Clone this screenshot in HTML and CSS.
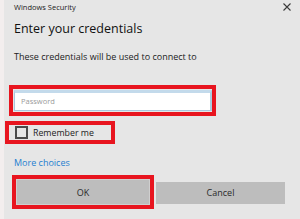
FILE: index.html
```html
<!DOCTYPE html>
<html>
<head>
<meta charset="utf-8">
<link rel="stylesheet" href="styles.css">
</head>
<body>
<div class="dialog">
  <div class="titlebar">
    <span class="app">Windows Security</span>
    <svg class="close" width="8" height="8" viewBox="0 0 8 8"><path d="M0.5 0.5L7.5 7.5M7.5 0.5L0.5 7.5" stroke="#3a3a3a" stroke-width="1.1" fill="none"/></svg>
  </div>
  <h1 class="title">Enter your credentials</h1>
  <p class="desc">These credentials will be used to connect to</p>
  <div class="hl hl-input"><div class="input">Password</div></div>
  <div class="hl hl-check"><span class="box"></span><span class="label">Remember me</span></div>
  <a class="more">More choices</a>
  <div class="buttons">
    <div class="hl hl-ok"><div class="btn ok">OK</div></div>
    <div class="btn cancel">Cancel</div>
  </div>
</div>
</body>
</html>
```
FILE: styles.css
```css
html, body { margin: 0; padding: 0; }
body {
  width: 300px; height: 219px; overflow: hidden;
  background: #f3eeee;
  font-family: "Open Sans", "Noto Sans", sans-serif;
  color: #1b1b1b;
}
.dialog {
  margin-left: 4px;
  height: 219px;
  background: #e6e6e6;
  display: flex; flex-direction: column; align-items: flex-start;
}
.titlebar {
  align-self: stretch;
  height: 14px;
  display: flex; align-items: center; justify-content: space-between;
  padding: 0 9px 0 10px;
}
.app { font-size: 7.5px; line-height: 14px; color: #222; }
.close { display: block; }
.title {
  margin: 5px 0 0 10px;
  font-size: 12.5px; line-height: 20px; font-weight: 400; color: #111;
}
.desc {
  margin: 11px 0 0 10px;
  font-size: 9px; line-height: 14px; color: #222;
}
.hl { border: 4px solid #e8151f; box-sizing: border-box; }
.hl-input {
  margin: 21px 0 0 5px;
  width: 207px; height: 31px;
  padding: 1px 0 1px 1px;
}
.input {
  box-sizing: border-box;
  width: 198px; height: 21px;
  background: #fff;
  border: 1px solid #a9c7de; border-top: 3px solid #c3daeb;
  border-right: 2px solid #a9cde0;
  font-size: 7.5px; line-height: 16px; color: #9a9a9a;
  padding-left: 6px;
}
.hl-check {
  margin: 5px 0 0 1px;
  width: 110px; height: 23px;
  display: flex; align-items: center; gap: 5px;
  padding-left: 6px;
}
.box {
  box-sizing: border-box;
  width: 13px; height: 13px;
  border: 2px solid #4a4a4a;
}
.label { font-size: 8.8px; color: #222; }
.more {
  margin: 12px 0 0 10px;
  font-size: 9px; line-height: 14px; color: #1f7fd0;
}
.buttons {
  margin: 5px 0 0 8px;
  display: flex; align-items: center; gap: 2px;
}
.hl-ok { width: 142px; height: 34px; padding: 0; }
.btn {
  box-sizing: border-box;
  background: #bdbdbd;
  display: flex; align-items: center; justify-content: center;
  font-size: 9px; color: #2a2a2a;
}
.ok { width: 134px; height: 26px; border: 1px solid #cfcfcf; }
.cancel { width: 129px; height: 22px; margin-top: 1px; }
```
